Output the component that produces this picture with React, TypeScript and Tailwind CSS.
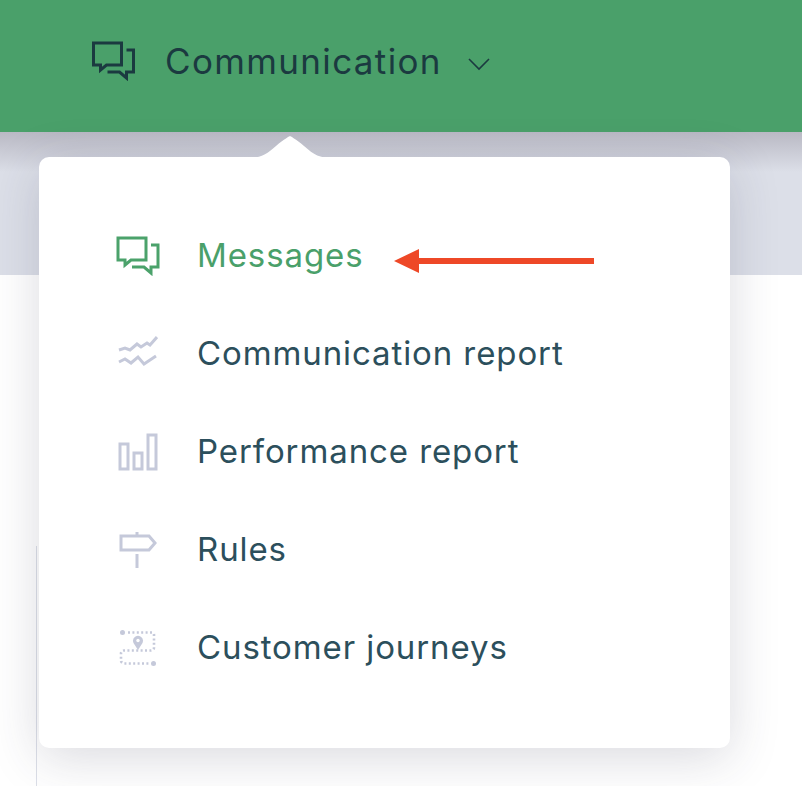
const font = { fontFamily: '"Inter", "Noto Sans", sans-serif' };

const ChatIcon = ({ className }: { className: string }) => (
  <svg viewBox="0 0 44 40" fill="none" stroke="currentColor" strokeWidth="3" className={className}>
    <path d="M2 2h28v22H15l-6 5v-5H2z" strokeLinejoin="miter" />
    <path d="M35 9h7v22h-7v6l-7-6h-12" />
  </svg>
);

const TrendIcon = () => (
  <svg viewBox="0 0 40 36" fill="none" stroke="#c5c9da" strokeWidth="3" className="w-10 h-9">
    <path d="M1 14l6-2 5 2 7-6 4 3 6-4 3 2 7-8" />
    <path d="M1 27l6-3 6 4 7-6 6 7 6-4 6-4" transform="translate(0 -1)" />
  </svg>
);

const BarsIcon = () => (
  <svg viewBox="0 0 40 38" fill="none" stroke="#c5c9da" strokeWidth="3" className="w-10 h-[38px]">
    <rect x="2" y="11" width="8" height="25" />
    <rect x="16" y="20" width="8" height="16" />
    <rect x="30" y="2" width="8" height="34" />
  </svg>
);

const SignIcon = () => (
  <svg viewBox="0 0 38 36" fill="none" stroke="#c5c9da" strokeWidth="3" className="w-[38px] h-9">
    <path d="M2 4h28l6 7-6 7H2z" />
    <path d="M18 0v4M18 22v14" />
  </svg>
);

const JourneyIcon = () => (
  <svg viewBox="0 0 38 38" fill="none" stroke="#c5c9da" strokeWidth="2.6" className="w-[38px] h-[38px]">
    <circle cx="3.5" cy="3.5" r="2.5" fill="#c5c9da" stroke="none" />
    <circle cx="34.5" cy="34.5" r="2.5" fill="#c5c9da" stroke="none" />
    <path d="M9 3.5h24a2 2 0 0 1 2 2v13a3 3 0 0 1-3 3H5a3 3 0 0 0-3 3v7a3 3 0 0 0 3 3h25" strokeDasharray="2 2.4" />
    <path d="M19 21l-4.5-7a5 5 0 1 1 9 0z" fill="#c5c9da" stroke="none" />
    <circle cx="19" cy="11.5" r="1.7" fill="#fff" stroke="none" />
  </svg>
);

const items = [
  { label: "Messages", icon: <ChatIcon className="w-[44px] h-10 text-[#4ba26b]" />, active: true },
  { label: "Communication report", icon: <TrendIcon /> },
  { label: "Performance report", icon: <BarsIcon /> },
  { label: "Rules", icon: <SignIcon /> },
  { label: "Customer journeys", icon: <JourneyIcon /> },
];

export default function App() {
  return (
    <div className="relative w-[802px] h-[786px] overflow-hidden bg-white" style={font}>
      <header className="relative z-10 h-[132px] bg-[#4aa06a] flex items-center pl-[91px] pb-[10px] text-[#1b3a40]">
        <ChatIcon className="w-[45px] h-[40px]" />
        <span className="ml-[29px] text-[35px] leading-none tracking-[1.35px]">Communication</span>
        <svg viewBox="0 0 24 14" fill="none" stroke="currentColor" strokeWidth="1.6" className="ml-[25px] mt-[6px] w-6 h-3.5">
          <path d="M2 2l10 10L22 2" />
        </svg>
      </header>
      <div className="h-[143px] bg-[#dcdfe8]">
        <div className="h-[40px] bg-gradient-to-b from-[#b9b9c4] to-[#dcdfe8]" />
      </div>
      <div className="absolute left-[36px] top-[546px] bottom-0 w-px bg-[#dcdfe8]" />

      <div className="absolute z-20 left-[39px] top-[157px] w-[691px] h-[591px] bg-white rounded-[10px] py-[50px] shadow-[0_10px_50px_rgba(50,50,80,0.18)]">
        <svg viewBox="0 0 84 22" className="absolute left-[209px] -top-[21px] w-[84px] h-[22px]" fill="#fff">
          <path d="M0 22c12 0 18-3 28-12 8-7 14-10 14-10s6 3 14 10c10 9 16 12 28 12z" />
        </svg>
        <ul>
          {items.map((item) => (
            <li key={item.label} className="h-[98px] flex items-center">
              <div className="w-[158px] pl-[77px] flex items-center">
                <div className="w-[44px] flex justify-center">{item.icon}</div>
              </div>
              <span
                className={`text-[33px] leading-none tracking-[0.9px] -mt-[1px] ${item.active ? "text-[#4aa06a]" : "text-[#2c4f5c]"}`}
              >
                {item.label}
              </span>
            </li>
          ))}
        </ul>
      </div>

      <svg viewBox="0 0 200 26" className="absolute z-30 left-[394px] top-[248px] w-[200px] h-[26px]">
        <path d="M0 13L25 1v9h175v6H25v9z" fill="#ee4827" />
      </svg>
    </div>
  );
}
